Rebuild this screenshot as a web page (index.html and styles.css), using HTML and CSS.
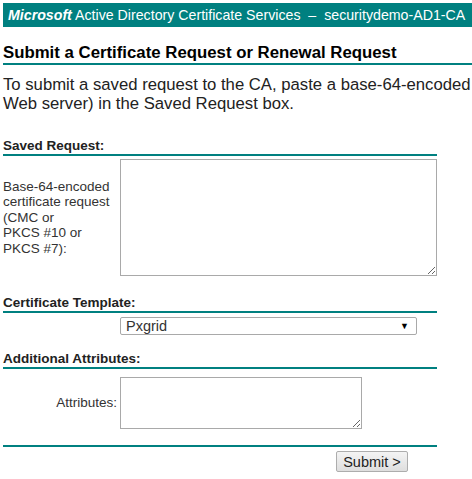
FILE: index.html
```html
<!DOCTYPE html>
<html>
<head>
    <meta charset="UTF-8">
    <title>Microsoft Active Directory Certificate Services</title>
    <link rel="stylesheet" href="styles.css">
</head>
<body>
    <div class="topbar">
        <b><i>Microsoft</i></b> Active Directory Certificate Services &nbsp;&ndash;&nbsp; securitydemo-AD1-CA
    </div>

    <h1 class="page-title">Submit a Certificate Request or Renewal Request</h1>

    <p class="intro">To submit a saved request to the CA, paste a base-64-encoded<br>Web server) in the Saved Request box.</p>

    <form class="request-form" onsubmit="return false;">
        <!-- Saved Request -->
        <div class="section-head">Saved Request:</div>
        <div class="form-row row-request">
            <label class="field-label" for="certReq">Base-64-encoded certificate request (CMC or<br>PKCS #10 or<br>PKCS #7):</label>
            <textarea id="certReq" class="req-box"></textarea>
        </div>

        <!-- Template -->
        <div class="section-head">Certificate Template:</div>
        <div class="form-row row-template">
            <div class="field-label"></div>
            <div class="select-box">
                <span>Pxgrid</span>
                <span class="arrow">&#9660;</span>
            </div>
        </div>

        <!-- Attributes -->
        <div class="section-head">Additional Attributes:</div>
        <div class="form-row row-attrib">
            <label class="field-label right" for="attrib">Attributes:</label>
            <textarea id="attrib" class="attrib-box"></textarea>
        </div>

        <div class="section-end"></div>
        <div class="actions">
            <button class="submit-btn">Submit &gt;</button>
        </div>
    </form>
</body>
</html>
```

FILE: styles.css
```css
* { box-sizing: border-box; }
body {
    margin: 0;
    padding: 3px 0 0 3px;
    font-family: Arial, "Liberation Sans", sans-serif;
    color: #000;
    background: #fff;
    overflow: hidden;
}

/* Header bar */
.topbar {
    background-color: #008080;
    color: #fff;
    height: 24px;
    line-height: 24px;
    padding-left: 5px;
    font-size: 14.2px;
    white-space: nowrap;
}

.page-title {
    margin: 16px 0 0 0;
    padding: 0;
    font-size: 16.8px;
    font-weight: bold;
    border-bottom: 2px solid #008080;
    line-height: 20px;
}

.intro {
    margin: 10px 0 0 0;
    font-size: 16.7px;
    line-height: 19px;
    white-space: nowrap;
    color: #222;
}

/* Form */
.request-form { width: 434px; margin-top: 25px; }
.section-head {
    font-size: 13.5px;
    font-weight: bold;
    line-height: 16px;
    border-bottom: 2px solid #008080;
    color: #222;
}
.form-row {
    display: grid;
    grid-template-columns: 117px 1fr;
    align-items: center;
}
.field-label {
    font-size: 13.5px;
    line-height: 15.5px;
    color: #333;
}
.field-label.right { text-align: right; padding-right: 3px; }

.row-request { margin-top: 3px; margin-bottom: 19px; }
.row-template { margin-top: 4px; margin-bottom: 16px; }
.row-attrib { margin-top: 8px; margin-bottom: 16px; }

textarea {
    border: 1px solid #a9a9a9;
    font-family: inherit;
    resize: both;
    display: block;
    margin: 0;
}
.req-box { width: 317px; height: 117px; }
.attrib-box { width: 242px; height: 52px; }

.select-box {
    width: 297px;
    height: 18px;
    border: 1px solid #a9a9a9;
    border-radius: 2px;
    display: flex;
    align-items: center;
    justify-content: space-between;
    padding: 0 7px 0 5px;
    font-size: 14.5px;
    color: #333;
}
.select-box .arrow { font-size: 9px; color: #000; }

.section-end { border-bottom: 2px solid #008080; }
.actions {
    display: flex;
    justify-content: flex-end;
    padding: 4px 29px 0 0;
}
.submit-btn {
    width: 72px;
    height: 21px;
    font-family: inherit;
    font-size: 14.5px;
    color: #222;
    border: 1px solid #adadad;
    border-radius: 2px;
    background: linear-gradient(#f4f4f4, #dedede);
    padding: 0;
}
```
